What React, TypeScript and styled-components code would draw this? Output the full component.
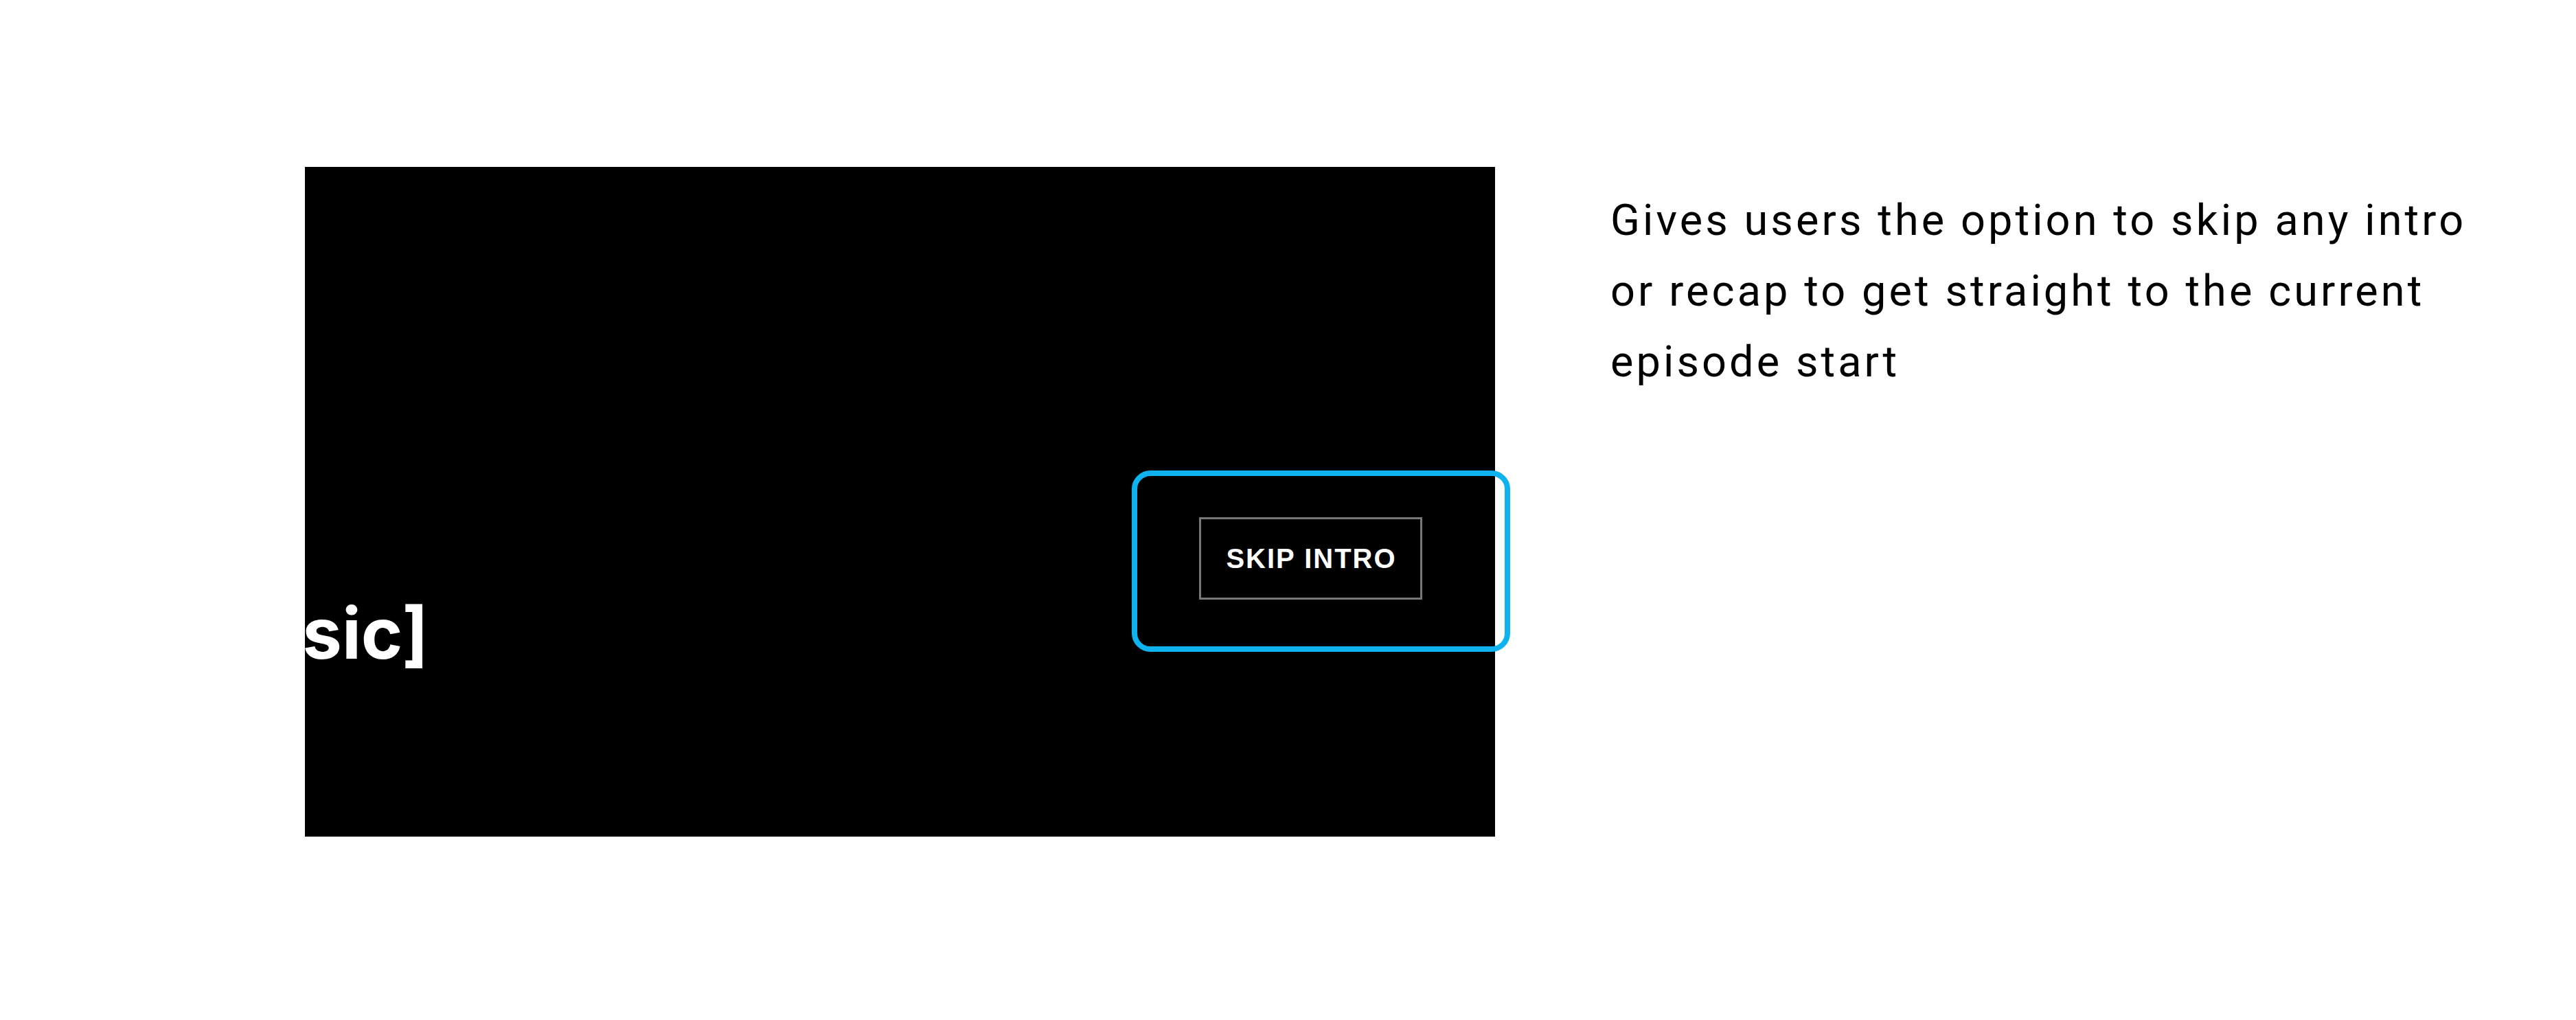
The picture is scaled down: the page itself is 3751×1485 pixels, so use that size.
import styled, { createGlobalStyle } from "styled-components";

const GlobalStyle = createGlobalStyle`
  html, body {
    margin: 0;
    padding: 0;
    background: #ffffff;
  }
  body {
    font-family: Roboto, "Liberation Sans", sans-serif;
  }
`;

const Page = styled.div`
  display: flex;
  align-items: flex-start;
  gap: 168px;
  width: 3751px;
  height: 1485px;
  padding: 243px 0 0 444px;
  box-sizing: border-box;
`;

const Stage = styled.div`
  position: relative;
  flex: none;
`;

const Video = styled.div`
  position: relative;
  width: 1733px;
  height: 975px;
  background: #000000;
  overflow: hidden;
`;

const Caption = styled.span`
  position: absolute;
  right: 1553px;
  top: 627px;
  font: normal normal 700 103px/103px Inter, "Liberation Sans", sans-serif;
  color: #ffffff;
  white-space: nowrap;
`;

const SkipButton = styled.button`
  position: absolute;
  left: 1302px;
  top: 510px;
  width: 325px;
  height: 120px;
  box-sizing: border-box;
  border: 3px solid #777777;
  background: transparent;
  color: #ffffff;
  font: normal normal 700 40px/1 "Liberation Sans", Arial, sans-serif;
  letter-spacing: 2px;
  padding: 0 0 0 2px;
  cursor: pointer;
`;

const Highlight = styled.div`
  position: absolute;
  left: 1204px;
  top: 442px;
  width: 551px;
  height: 264px;
  box-sizing: border-box;
  border: 8px solid #0db2ef;
  border-radius: 27px;
  pointer-events: none;
`;

const Description = styled.p`
  margin: 26px 0 0 0;
  width: 1300px;
  font: normal normal 400 63px/103px Roboto, "Liberation Sans", sans-serif;
  letter-spacing: 4.1px;
  color: #000000;
`;

export default function App() {
  return (
    <>
      <GlobalStyle />
      <Page>
        <Stage>
          <Video>
            <Caption>[Music]</Caption>
            <SkipButton>SKIP INTRO</SkipButton>
          </Video>
          <Highlight />
        </Stage>
        <Description>
          Gives users the option to skip any intro or recap to get straight to the current episode start
        </Description>
      </Page>
    </>
  );
}
